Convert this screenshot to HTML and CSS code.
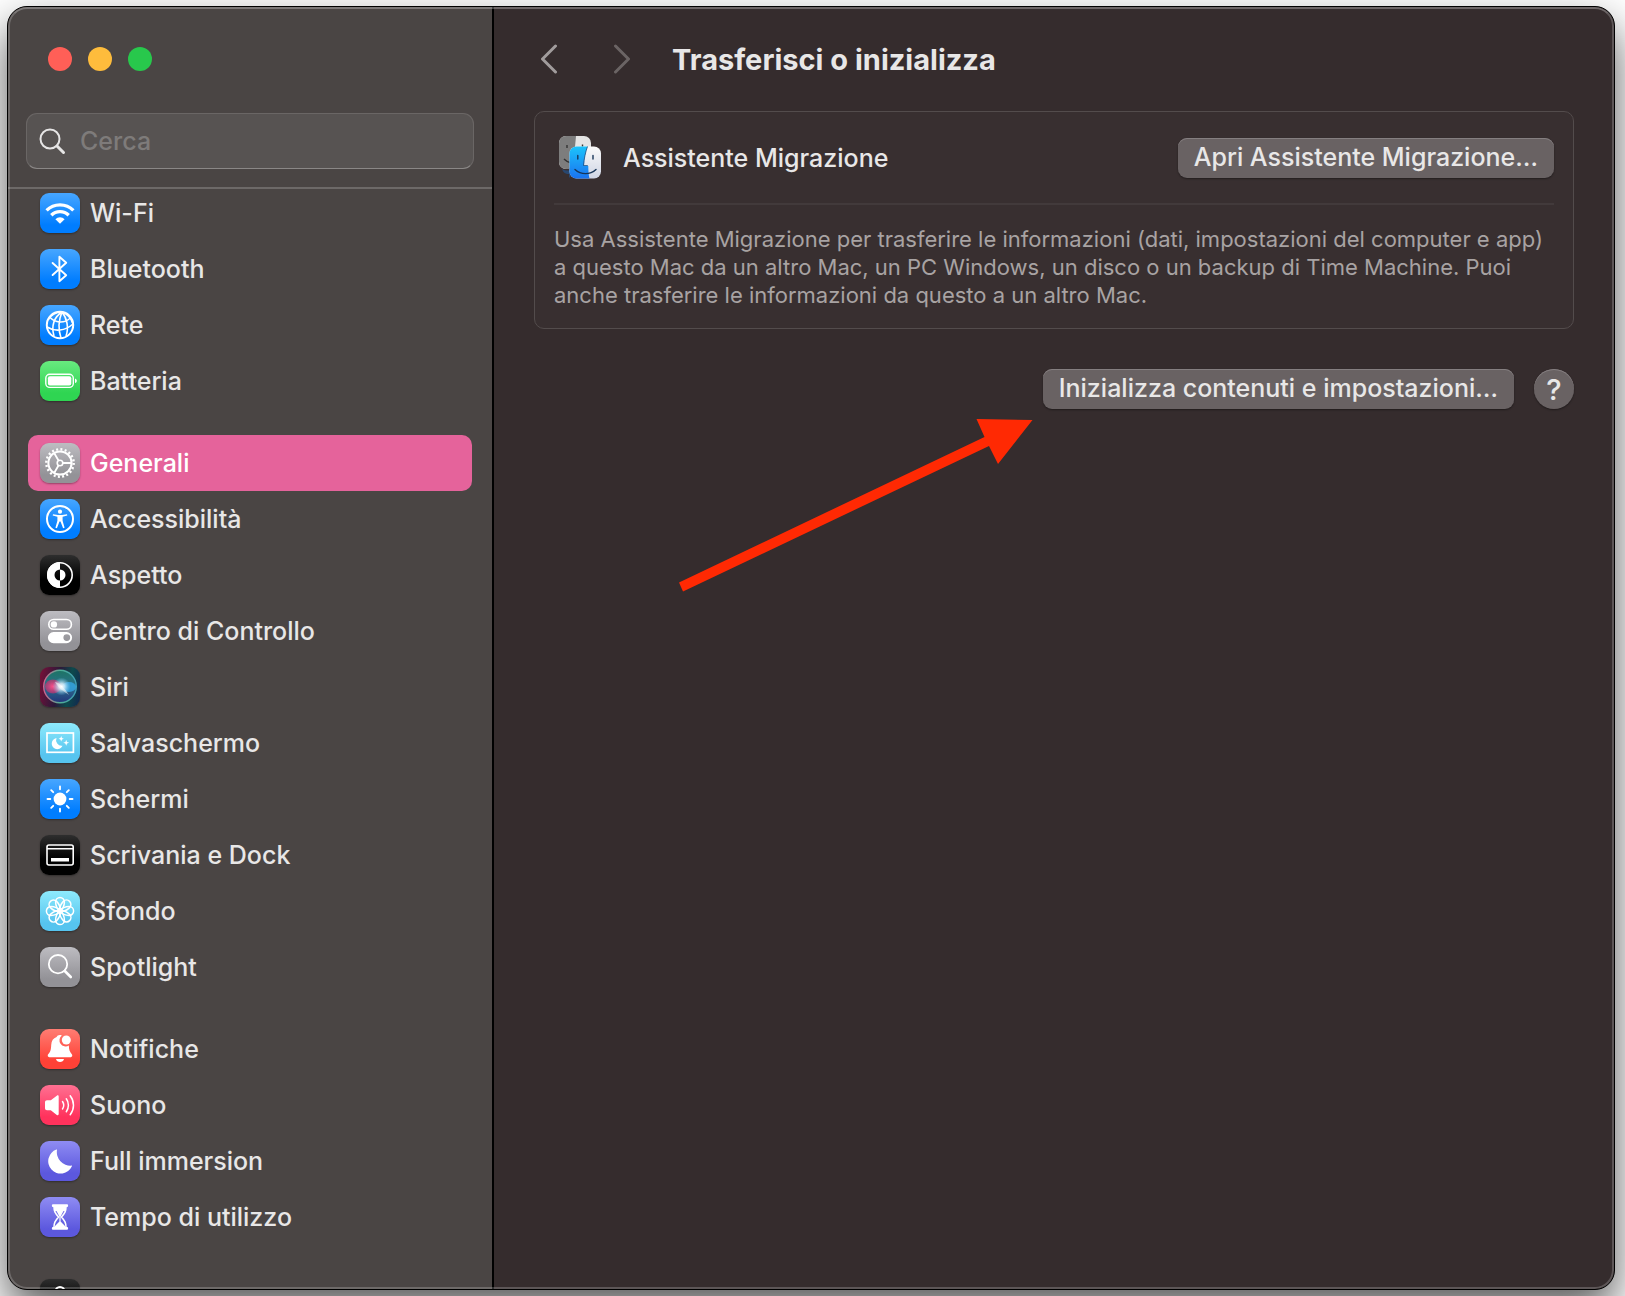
FILE: index.html
```
<!DOCTYPE html>
<html lang="it">

<head>
    <meta charset="UTF-8">
    <meta name="viewport" content="width=device-width, initial-scale=1.0">
    <title>Trasferisci o inizializza</title>
    <link rel="stylesheet" href="styles.css">
</head>

<body>
    <div class="window">
        <!-- Barra laterale -->
        <aside class="sidebar">
            <div class="sidebar-top">
                <div class="lights">
                    <button class="light red" aria-label="Chiudi"></button>
                    <button class="light yellow" aria-label="Riduci"></button>
                    <button class="light green" aria-label="Ingrandisci"></button>
                </div>
                <label class="search">
                    <svg width="28" height="28" viewBox="0 0 28 28" fill="none" stroke="#e6e5e5" stroke-linecap="round">
                        <circle cx="12" cy="12" r="9.5" stroke-width="2" />
                        <path d="M19 19l6.5 6.5" stroke-width="3" />
                    </svg>
                    <input type="text" placeholder="Cerca" aria-label="Cerca">
                </label>
            </div>

            <nav class="menu">
                <div class="menu-group">
                    <a class="item" href="#wifi">
                        <svg class="icon blue" viewBox="0 0 40 40" fill="none" stroke="#fff" stroke-width="3.4">
                            <path d="M6.6 17.4a19 19 0 0 1 26.8 0M11.3 22.2a12.3 12.3 0 0 1 17.4 0" />
                            <path d="M20 30.8l-4.6-4.6a6.5 6.5 0 0 1 9.2 0z" fill="#fff" stroke="none" />
                        </svg>
                        <span>Wi-Fi</span>
                    </a>
                    <a class="item" href="#bluetooth">
                        <svg class="icon blue" viewBox="0 0 40 40" fill="none" stroke="#fff" stroke-width="1.9" stroke-linejoin="round" stroke-linecap="round">
                            <path d="M12.6 14l13.6 12.2-6.8 6V7.8l6.8 6L12.6 26" />
                        </svg>
                        <span>Bluetooth</span>
                    </a>
                    <a class="item" href="#rete">
                        <svg class="icon blue" viewBox="0 0 40 40" fill="none" stroke="#fff" stroke-width="1.6">
                            <circle cx="20" cy="20" r="13.2" stroke-width="2" />
                            <path d="M22 7c-8 5-11 14-8 24M22 7c-3 7-4 17-1 26M22 7c5 6 7 16 4 24M22 7c-6 0-11 3-14 8M22 7c5 2 9 6 10.5 11" />
                            <path d="M9.5 12c6 6 14 7 21 1M7 22c8 5 18 4 26-3" />
                        </svg>
                        <span>Rete</span>
                    </a>
                    <a class="item" href="#batteria">
                        <svg class="icon lime" viewBox="0 0 40 40" fill="#fff">
                            <rect x="5.8" y="13.2" width="27.5" height="13.2" rx="4" fill="none" stroke="#fff" stroke-width="1.4" />
                            <rect x="7.9" y="15.2" width="23.4" height="9.2" rx="2" />
                            <path d="M35 17.5c2.4.8 2.4 3.8 0 4.6z" />
                        </svg>
                        <span>Batteria</span>
                    </a>
                </div>

                <div class="menu-group">
                    <a class="item selected" href="#generali" aria-current="page">
                        <svg class="icon gray" viewBox="0 0 40 40" fill="none" stroke="#fff">
                            <circle cx="20" cy="20" r="11.6" stroke-width="2" />
                            <circle cx="20" cy="20" r="13.7" stroke-width="2.4" stroke-dasharray="2 2.304" />
                            <circle cx="20" cy="20" r="2.8" stroke-width="1.6" />
                            <path d="M23 20h8.5M18.5 17.5l-4.5-7.8M18.5 22.5L14 30.3" stroke-width="1.8" />
                        </svg>
                        <span>Generali</span>
                    </a>
                    <a class="item" href="#accessibilita">
                        <svg class="icon blue" viewBox="0 0 40 40" fill="#fff">
                            <circle cx="20" cy="20" r="13" fill="none" stroke="#fff" stroke-width="2" />
                            <circle cx="20" cy="12.7" r="2.1" />
                            <path d="M13 15.2l5 .7h4l5-.7.3 1.3-4.7 1.3v4l2 7-1.5.5-2.6-6.7h-1l-2.6 6.7-1.5-.5 2-7v-4l-4.700-1.3z" />
                        </svg>
                        <span>Accessibilità</span>
                    </a>
                    <a class="item" href="#aspetto">
                        <svg class="icon black" viewBox="0 0 40 40" fill="#fff">
                            <circle cx="20" cy="20" r="12.2" fill="none" stroke="#fff" stroke-width="1.6" />
                            <path d="M20 7a13 13 0 0 0 0 26v-7.5a5.5 5.5 0 0 1 0-11z" />
                            <path d="M20 14.5a5.5 5.5 0 0 1 0 11z" />
                        </svg>
                        <span>Aspetto</span>
                    </a>
                    <a class="item" href="#centro">
                        <svg class="icon gray" viewBox="0 0 40 40" fill="#fff">
                            <rect x="8.8" y="8.5" width="22.6" height="9.8" rx="4.9" fill="none" stroke="#fff" stroke-width="1.6" />
                            <circle cx="13.9" cy="13.4" r="3.2" />
                            <path fill-rule="evenodd" d="M13.5 21h13a5.6 5.6 0 0 1 0 11.2h-13a5.6 5.6 0 0 1 0-11.2zm13.3 2.2a3.4 3.4 0 1 0 0 6.8 3.4 3.4 0 0 0 0-6.8z" />
                        </svg>
                        <span>Centro di Controllo</span>
                    </a>
                    <a class="item" href="#siri">
                        <svg class="icon siri" viewBox="0 0 40 40">
                            <defs>
                                <radialGradient id="siriGlow">
                                    <stop offset="0" stop-color="#fff" />
                                    <stop offset=".35" stop-color="#dff4ff" stop-opacity=".8" />
                                    <stop offset="1" stop-color="#7fd4ff" stop-opacity="0" />
                                </radialGradient>
                                <radialGradient id="siriRose">
                                    <stop offset="0" stop-color="#ff4f8b" />
                                    <stop offset="1" stop-color="#d62c6c" stop-opacity=".6" />
                                </radialGradient>
                                <linearGradient id="siriRing" x1="0" x2="1">
                                    <stop offset="0" stop-color="#d0608c" />
                                    <stop offset=".5" stop-color="#4fae94" />
                                    <stop offset="1" stop-color="#3f9db5" />
                                </linearGradient>
                                <linearGradient id="siriBall" x1="0" y1="0" x2="0" y2="1">
                                    <stop offset="0" stop-color="#1d7464" />
                                    <stop offset=".5" stop-color="#2a6f8a" />
                                    <stop offset="1" stop-color="#24357c" />
                                </linearGradient>
                            </defs>
                            <circle cx="20" cy="19.5" r="16.3" fill="url(#siriBall)" stroke="url(#siriRing)" stroke-width="1.4" />
                            <ellipse cx="13" cy="19.5" rx="8" ry="7" fill="url(#siriRose)" />
                            <ellipse cx="29" cy="20" rx="7" ry="5" fill="#35a9ea" opacity=".75" />
                            <circle cx="21.5" cy="19.5" r="9" fill="url(#siriGlow)" />
                            <path d="M15 15c5 1 9 5 14 13-4-3-10-6-14-13z" fill="#fff" opacity=".5" />
                        </svg>
                        <span>Siri</span>
                    </a>
                    <a class="item" href="#salvaschermo">
                        <svg class="icon cyan" viewBox="0 0 40 40" fill="#fff">
                            <rect x="7" y="10" width="26.4" height="19.3" fill="none" stroke="#fff" stroke-width="1.7" />
                            <path d="M16.5 15a5.6 5.6 0 1 0 6 7.7 5.6 5.6 0 0 1-6-7.7z" />
                            <path d="M21.2 13l.8 1.9 1.9.8-1.9.8-.8 1.9-.8-1.9-1.9-.8 1.9-.8zM26.2 16.8l.8 2.2 2.2.8-2.2.8-.8 2.2-.8-2.2-2.2-.8 2.2-.8z" />
                        </svg>
                        <span>Salvaschermo</span>
                    </a>
                    <a class="item" href="#schermi">
                        <svg class="icon blue" viewBox="0 0 40 40" fill="none" stroke="#fff" stroke-width="1.9" stroke-linecap="round">
                            <circle cx="20" cy="20" r="6.4" fill="#fff" stroke="none" />
                            <path d="M20 7.5v2.8M20 29.7v2.8M7.5 20h2.8M29.7 20h2.8M11.2 11.2l2 2M26.8 26.8l2 2M28.8 11.2l-2 2M13.2 26.8l-2 2" />
                        </svg>
                        <span>Schermi</span>
                    </a>
                    <a class="item" href="#dock">
                        <svg class="icon black" viewBox="0 0 40 40" fill="none" stroke="#fff">
                            <rect x="7" y="10" width="26.2" height="20" rx="2" stroke-width="1.6" />
                            <path d="M7 13.7h26" stroke-width="1.6" />
                            <path d="M11 24.8h18" stroke-width="3.6" />
                        </svg>
                        <span>Scrivania e Dock</span>
                    </a>
                    <a class="item" href="#sfondo">
                        <svg class="icon cyan" viewBox="0 0 40 40" fill="none" stroke="#fff" stroke-width="1.5">
                            <defs>
                                <path id="petal" d="M20 21c-2.500-2.500-4.400-6-4.400-10.200a4.400 4.400 0 0 1 8.800 0c0 4.200-1.900 7.700-4.400 10.200z" />
                            </defs>
                            <use href="#petal" />
                            <use href="#petal" transform="rotate(45 20 20)" />
                            <use href="#petal" transform="rotate(90 20 20)" />
                            <use href="#petal" transform="rotate(135 20 20)" />
                            <use href="#petal" transform="rotate(180 20 20)" />
                            <use href="#petal" transform="rotate(225 20 20)" />
                            <use href="#petal" transform="rotate(270 20 20)" />
                            <use href="#petal" transform="rotate(315 20 20)" />
                        </svg>
                        <span>Sfondo</span>
                    </a>
                    <a class="item" href="#spotlight">
                        <svg class="icon gray" viewBox="0 0 40 40" fill="none" stroke="#fff" stroke-linecap="round">
                            <circle cx="18" cy="17.2" r="9.2" stroke-width="1.8" />
                            <path d="M24.8 24l6 6" stroke-width="2.6" />
                        </svg>
                        <span>Spotlight</span>
                    </a>
                </div>

                <div class="menu-group">
                    <a class="item" href="#notifiche">
                        <svg class="icon coral" viewBox="0 0 40 40" fill="#fff">
                            <path d="M21.8 6.4a6.2 6.2 0 0 0 7 10.2c.2 4.4 1 6.4 3.2 9 .6 1 .2 2.6-1.2 2.6H9.2c-1.4 0-1.8-1.6-1.2-2.6 2.6-3 3-5 3.2-9.6.2-4 2-6.8 5.4-7.9.6-2 3-2.7 5.2-1.7z" />
                            <circle cx="26.3" cy="11" r="4.5" />
                            <path d="M16 30h8c-.6 4-7.4 4-8 0z" />
                        </svg>
                        <span>Notifiche</span>
                    </a>
                    <a class="item" href="#suono">
                        <svg class="icon pink" viewBox="0 0 40 40" fill="none" stroke="#fff" stroke-width="1.5" stroke-linecap="round">
                            <path d="M7 15.3h3.800l6-4.600c.9-.7 1.900-.3 1.900.8v17.600c0 1.100-1 1.500-1.900.8l-6-4.600H7c-1.200 0-2-.8-2-2v-6c0-1.200.8-2 2-2z" fill="#fff" stroke="none" />
                            <path d="M22.5 16.5c1.5 2.2 1.5 5.3 0 7.5M26.3 13.8c2.8 3.7 2.8 9.2 0 12.9M30.2 10.800c4.4 5.6 4.4 13.3 0 18.900" />
                        </svg>
                        <span>Suono</span>
                    </a>
                    <a class="item" href="#immersion">
                        <svg class="icon violet" viewBox="0 0 40 40" fill="#fff">
                            <path d="M17 9a13.5 13.5 0 0 0 14.5 15.6c.4 0 .6.3.4.7A12.4 12.4 0 1 1 16.4 8.500c.4-.2.7.1.6.5z" />
                        </svg>
                        <span>Full immersion</span>
                    </a>
                    <a class="item" href="#tempo">
                        <svg class="icon violet" viewBox="0 0 40 40" fill="#fff">
                            <path d="M13 7.200h14c1.500 0 1.500 2.800 0 2.800H13c-1.500 0-1.500-2.800 0-2.800zM13 30h14c1.500 0 1.500 2.800 0 2.800H13c-1.500 0-1.500-2.800 0-2.800z" />
                            <path d="M14 9.500c0 5 1.200 6.500 4.500 10.500-3.300 4-4.500 5.500-4.500 10.500M26 9.500c0 5-1.200 6.500-4.500 10.500 3.300 4 4.500 5.500 4.500 10.500" fill="none" stroke="#fff" stroke-width="1.600" />
                            <path d="M16 13h8l-3.400 6.500v5l4.400 4.500v1.500H15V29l4.400-4.500v-5zM14 9h12l-.6 5h-10.800z" />
                        </svg>
                        <span>Tempo di utilizzo</span>
                    </a>
                </div>

                <div class="menu-group">
                    <a class="item" href="#blocco" aria-label="Blocco schermo">
                        <svg class="icon black" viewBox="0 0 40 40" fill="none" stroke="#fff" stroke-width="2">
                            <path d="M15.5 18v-5.5a4.5 4.5 0 0 1 9 0V18" />
                            <rect x="12.5" y="18" width="15" height="13" rx="2" fill="#fff" />
                        </svg>
                    </a>
                </div>
            </nav>
        </aside>

        <!-- Contenuto -->
        <main class="content">
            <header class="toolbar">
                <button class="nav-btn" aria-label="Indietro">
                    <svg width="18" height="30" viewBox="0 0 18 30"><path d="M15.5 2L2.5 15l13 13" /></svg>
                </button>
                <button class="nav-btn forward" aria-label="Avanti" disabled>
                    <svg width="18" height="30" viewBox="0 0 18 30"><path d="M2.5 2l13 13-13 13" /></svg>
                </button>
                <h1>Trasferisci o inizializza</h1>
            </header>

            <section class="panel">
                <div class="panel-row">
                    <svg class="finder" width="44" height="44" viewBox="0 0 44 44">
                        <defs>
                            <linearGradient id="faceBlue" x1="0" y1="0" x2="0" y2="1">
                                <stop offset="0" stop-color="#1cc3fb" />
                                <stop offset="1" stop-color="#1a73f0" />
                            </linearGradient>
                            <linearGradient id="faceWhite" x1="0" y1="0" x2="0" y2="1">
                                <stop offset="0" stop-color="#fafafa" />
                                <stop offset="1" stop-color="#cfd5e4" />
                            </linearGradient>
                        </defs>
                        <rect x="0" y="0" width="32" height="33" rx="7" fill="#e4e4e4" />
                        <path d="M17 0H7a7 7 0 0 0-7 7v19a7 7 0 0 0 7 7h7z" fill="#7d7d7d" />
                        <path d="M8 9v3M23.5 8.5v3M5 23c2 2 4 3 6 3.5" stroke="#333" stroke-width="1.4" fill="none" />
                        <path d="M3 33c1 3 3 5 7 5v4l5-5.5-5-5v3c-3 0-5-.5-7-1.5z" fill="#28476f" />
                        <rect x="10.5" y="10.5" width="31.5" height="32" rx="7" fill="url(#faceWhite)" />
                        <path d="M28.5 10.5h-11a7 7 0 0 0-7 7v18a7 7 0 0 0 7 7h13c-.8-3-1.2-8-1.2-12.5H25c0-7 1.5-14 3.5-19.5z" fill="url(#faceBlue)" />
                        <path d="M28.5 10.5C26.5 16 25 23 24.5 29.5h4.3" stroke="#1d4d80" stroke-width=".8" fill="none" />
                        <path d="M18.8 19.5v3.5M34 19.5v3.5M16 33.5c6 5.5 15 5.5 21 0" stroke="#173558" stroke-width="1.4" stroke-linecap="round" fill="none" />
                    </svg>
                    <h2>Assistente Migrazione</h2>
                    <button class="btn">Apri Assistente Migrazione…</button>
                </div>
                <p>Usa Assistente Migrazione per trasferire le informazioni (dati, impostazioni del computer e app) a questo Mac da un altro Mac, un PC Windows, un disco o un backup di Time Machine. Puoi anche trasferire le informazioni da questo a un altro Mac.</p>
            </section>

            <div class="actions">
                <button class="btn">Inizializza contenuti e impostazioni…</button>
                <button class="help" aria-label="Aiuto">?</button>
                <!-- Freccia rossa verso il pulsante -->
                <svg class="arrow" width="354" height="174" viewBox="0 0 354 174">
                    <path d="M0 163.5L305.5 18 297.5 0 353.5 1 319 45 310 27 4 172.5z" fill="#ff2903" />
                </svg>
            </div>
        </main>
    </div>
</body>

</html>
```
FILE: styles.css
```
* {
    margin: 0;
    padding: 0;
    box-sizing: border-box;
}

body {
    height: 100vh;
    padding: 6px 10px 6px 7px;
    overflow: hidden;
    background: #fff;
    font-family: Inter, "Liberation Sans", sans-serif;
    font-size: 25px;
    font-weight: 500;
    color: #e8e7e7;
}

button,
input {
    font: inherit;
    color: inherit;
    border: none;
    background: none;
}

/* finestra */
.window {
    position: relative;
    display: flex;
    height: 100%;
    border: 1px solid #000;
    border-radius: 20px;
    overflow: hidden;
    background: #352c2d;
    box-shadow: 0 20px 44px rgba(0, 0, 0, 0.65);
}

/* bordo chiaro interno */
.window::after {
    content: "";
    position: absolute;
    inset: 0;
    border: 2px solid rgba(255, 255, 255, 0.2);
    border-top-color: rgba(255, 255, 255, 0.28);
    border-radius: 19px;
    pointer-events: none;
}

/* barra laterale */
.sidebar {
    flex: 0 0 486px;
    min-width: 0;
    border-right: 2px solid #000;
    background: #4a4544;
}

.sidebar-top {
    padding: 40px 18px 18px;
    border-bottom: 2px solid #6d6968;
}

.lights {
    display: flex;
    gap: 16px;
    padding-left: 22px;
    margin-bottom: 42px;
}

.light {
    width: 24px;
    height: 24px;
    border-radius: 50%;
}

.red {
    background: #ff5f57;
}

.yellow {
    background: #febc3c;
}

.green {
    background: #28c84c;
}

.search {
    display: flex;
    align-items: center;
    gap: 14px;
    height: 56px;
    padding: 0 11px;
    border: 1px solid #6a6665;
    border-bottom-color: #8a8786;
    border-radius: 11px;
    background: #575352;
}

.search input {
    flex: 1;
    min-width: 0;
    outline: none;
}

.search input::placeholder {
    color: #7e7b7a;
    opacity: 1;
}

/* la lista e' leggermente scorsa sotto la ricerca */
.menu {
    margin: -4px 20px 0;
}

.menu-group {
    margin-bottom: 26px;
}

.item {
    display: flex;
    align-items: center;
    gap: 10px;
    height: 56px;
    padding: 0 12px;
    border-radius: 10px;
    color: inherit;
    text-decoration: none;
}

.selected {
    background: #e5639b;
    color: #fff;
}

.icon {
    flex: none;
    width: 40px;
    height: 40px;
    border-radius: 9px;
    box-shadow: 0 1px 2px rgba(0, 0, 0, 0.35);
}

.blue {
    background: linear-gradient(#47a6ff, #007dff 80%);
}

.lime {
    background: linear-gradient(#68ea7f, #2fd552 80%);
}

.gray {
    background: linear-gradient(#bdbcc1, #939297 80%);
}

.black {
    background: linear-gradient(#2e2e2e, #000 60%);
}

.cyan {
    background: linear-gradient(#8eeafc, #56c4ef 80%);
}

.coral {
    background: linear-gradient(#ff7d73, #ff4136 80%);
}

.pink {
    background: linear-gradient(#ff7092, #ff325c 80%);
}

.violet {
    background: linear-gradient(#8f8cf3, #5c58de 80%);
}

.siri {
    background: linear-gradient(100deg, #7a0f38, #2a1a3a 45%, #0d4a4c 70%, #12264f);
}

/* contenuto */
.content {
    flex: 1;
    min-width: 0;
    padding: 0 40px;
}

.toolbar {
    display: flex;
    align-items: center;
    height: 104px;
    padding: 0 6px;
}

.nav-btn {
    display: flex;
    margin-right: 55px;
}

.forward {
    margin-right: 41px;
}

.nav-btn path {
    fill: none;
    stroke: #a19c9c;
    stroke-width: 3;
    stroke-linecap: round;
    stroke-linejoin: round;
}

.forward path {
    stroke: #6b6464;
}

h1 {
    font-size: 29px;
    font-weight: 700;
}

.panel {
    padding: 0 19px 19px;
    border: 1px solid #534c4c;
    border-radius: 10px;
    background: #382f30;
}

.panel-row {
    display: flex;
    align-items: center;
    gap: 20px;
    height: 93px;
    padding-left: 5px;
    border-bottom: 2px solid #423a3b;
}

.finder {
    flex: none;
}

h2 {
    flex: 1;
    font-size: 25px;
    font-weight: 500;
}

.panel p {
    padding-top: 20px;
    font-size: 22px;
    font-weight: 400;
    line-height: 28px;
    color: #a8a3a3;
}

.btn,
.help {
    height: 40px;
    background: #696263;
    box-shadow: inset 0 1px 0 #857f80, 0 1px 2px rgba(0, 0, 0, 0.4);
}

.btn {
    padding: 0 16px 2px;
    border-radius: 9px;
    white-space: nowrap;
}

.actions {
    position: relative;
    display: flex;
    justify-content: flex-end;
    gap: 20px;
    margin-top: 40px;
}

.help {
    width: 40px;
    border-radius: 50%;
    font-size: 29px;
}

.arrow {
    position: absolute;
    top: 50px;
    right: 541px;
}
```
